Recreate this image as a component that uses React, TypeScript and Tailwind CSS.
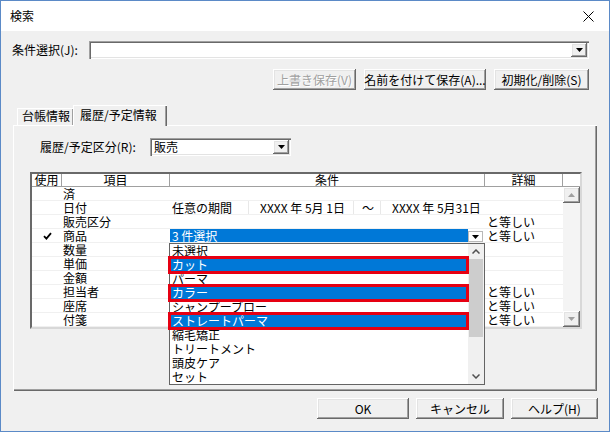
import React from 'react';

const raised =
  'shadow-[inset_-1px_-1px_0_#696969,inset_1px_1px_0_#ffffff,inset_-2px_-2px_0_#a0a0a0,inset_2px_2px_0_#e3e3e3]';
const sunken =
  'shadow-[inset_1px_1px_0_#a0a0a0,inset_2px_2px_0_#696969,inset_-1px_-1px_0_#ffffff,inset_-2px_-2px_0_#e3e3e3]';

const DownTri = ({ fill = '#000' }: { fill?: string }) => (
  <svg width="7" height="4" viewBox="0 0 7 4">
    <path d="M0 0H7L3.5 4Z" fill={fill} />
  </svg>
);

const UpTri = ({ fill = '#000' }: { fill?: string }) => (
  <svg width="7" height="4" viewBox="0 0 7 4">
    <path d="M0 4H7L3.5 0Z" fill={fill} />
  </svg>
);

const Chevron = ({ up = false }: { up?: boolean }) => (
  <svg width="8" height="5" viewBox="0 0 8 5">
    <path
      d={up ? 'M0.5 4.5L4 1L7.5 4.5' : 'M0.5 0.5L4 4L7.5 0.5'}
      fill="none"
      stroke="#505050"
      strokeWidth="1.5"
    />
  </svg>
);

const Combo = ({ value, className = '' }: { value?: string; className?: string }) => (
  <div className={`flex items-center h-[18px] bg-white ${sunken} ${className}`}>
    <span className="pl-[4px] flex-1 leading-[14px]">{value}</span>
    <div className={`mr-[2px] w-[16px] h-[14px] bg-[#f0f0f0] flex items-center justify-center ${raised}`}>
      <DownTri />
    </div>
  </div>
);

const Button = ({
  label,
  className = '',
  disabled = false,
}: {
  label: string;
  className?: string;
  disabled?: boolean;
}) => (
  <button
    className={`h-[21px] bg-[#f0f0f0] flex items-center justify-center leading-none ${raised} ${
      disabled ? 'text-[#a0a0a0] [text-shadow:1px_1px_0_#ffffff]' : 'text-black'
    } ${className}`}
  >
    {label}
  </button>
);

type Row = { name: string; used?: boolean; detail?: string; kind?: 'date' | 'combo' };

const rows: Row[] = [
  { name: '済' },
  { name: '日付', kind: 'date' },
  { name: '販売区分', detail: 'と等しい' },
  { name: '商品', used: true, detail: 'と等しい', kind: 'combo' },
  { name: '数量' },
  { name: '単価' },
  { name: '金額' },
  { name: '担当者', detail: 'と等しい' },
  { name: '座席', detail: 'と等しい' },
  { name: '付箋', detail: 'と等しい' },
];

const options: [string, boolean][] = [
  ['未選択', false],
  ['カット', true],
  ['パーマ', false],
  ['カラー', true],
  ['シャンプーブロー', false],
  ['ストレートパーマ', true],
  ['縮毛矯正', false],
  ['トリートメント', false],
  ['頭皮ケア', false],
  ['セット', false],
];

const Dropdown = () => (
  <div className="absolute left-[-1px] top-[14px] z-20 w-[316px] h-[142px] border border-[#646464] bg-white flex">
    <div className="w-[298px] flex flex-col">
      {options.map(([label, selected]) => (
        <div
          key={label}
          className={`relative h-[14px] leading-[14px] pl-[2px] ${selected ? 'bg-[#0078d7] text-white' : 'text-black'}`}
        >
          {label}
          {selected && (
            <div className="absolute -left-[2px] -right-[1px] -top-[2px] -bottom-[2px] border-[3px] border-[#e60012] z-10" />
          )}
        </div>
      ))}
    </div>
    <div className="w-[16px] bg-[#f0f0f0] flex flex-col">
      <div className="h-[15px] flex items-center justify-center">
        <Chevron up />
      </div>
      <div className="h-[78px] mx-[1px] bg-[#cdcdcd]" />
      <div className="flex-1" />
      <div className="h-[15px] flex items-center justify-center">
        <Chevron />
      </div>
    </div>
  </div>
);

const ConditionCell = ({ row }: { row: Row }) => {
  if (row.kind === 'date') {
    return (
      <div className="w-[315px] flex">
        <div className="w-[78px] pl-[2px]">任意の期間</div>
        <div className="w-[105px] pl-[11px] border-l border-[#e8e8e8]">XXXX 年 5月 1日</div>
        <div className="w-[27px] pl-[8px] border-l border-[#e8e8e8]">～</div>
        <div className="w-[105px] pl-[11px] border-l border-[#e8e8e8]">XXXX 年 5月31日</div>
      </div>
    );
  }
  if (row.kind === 'combo') {
    return (
      <div className="relative w-[315px] flex">
        <div className="w-[298px] bg-[#0078d7] text-white pl-[2px]">3 件選択</div>
        <div className="w-[15px] h-[11px] mt-[2px] bg-white border border-[#b8b8b8] flex items-center justify-center">
          <DownTri />
        </div>
        <Dropdown />
      </div>
    );
  }
  return <div className="w-[315px]" />;
};

const Check = () => (
  <svg width="9" height="8" viewBox="0 0 9 8">
    <path d="M1 4.2L3.4 6.6L8 1.2" fill="none" stroke="#000" strokeWidth="1.8" />
  </svg>
);

const ItemTable = () => (
  <div className="ml-[17px] mt-[16px] w-[552px] h-[157px] border-2 border-t-[#696969] border-l-[#696969] border-r-[#d8d8d8] border-b-[#d8d8d8] bg-white flex flex-col">
    <div className="flex h-[13px] leading-[12px] border-b border-[#a0a0a0] shrink-0">
      <div className="w-[30px] text-center border-r border-[#a0a0a0]">使用</div>
      <div className="w-[108px] text-center border-r border-[#a0a0a0]">項目</div>
      <div className="w-[315px] text-center border-r border-[#a0a0a0]">条件</div>
      <div className="w-[78px] text-center border-r border-[#a0a0a0]">詳細</div>
      <div className="w-[17px]" />
    </div>
    <div className="flex flex-1">
      <div className="w-[531px] flex flex-col">
        {rows.map((row) => (
          <div key={row.name} className="flex h-[14px] leading-[13px] border-b border-[#f0f0f0]">
            <div className="w-[30px] flex items-center justify-center">{row.used && <Check />}</div>
            <div className="w-[108px] pl-[1px]">{row.name}</div>
            <ConditionCell row={row} />
            <div className="w-[78px] pl-[2px]">{row.detail}</div>
          </div>
        ))}
      </div>
      <div className="w-[17px] bg-[#f4f4f4] flex flex-col">
        <div className={`h-[16px] bg-[#f0f0f0] flex items-center justify-center ${raised}`}>
          <UpTri fill="#a0a0a0" />
        </div>
        <div className="flex-1" />
        <div className={`h-[16px] bg-[#f0f0f0] flex items-center justify-center ${raised}`}>
          <DownTri fill="#a0a0a0" />
        </div>
      </div>
    </div>
  </div>
);

export default function App() {
  return (
    <div className="w-[610px] h-[432px] border border-[#5b8ac7] bg-[#f0f0f0] flex flex-col overflow-hidden text-[12px] text-black font-['Noto_Sans_CJK_JP','Noto_Sans_CJK_SC',sans-serif]">
      {/* title bar */}
      <div className="h-[30px] shrink-0 bg-white flex items-center justify-between pl-[9px] pr-[15px]">
        <span>検索</span>
        <svg width="11" height="11" viewBox="0 0 11 11">
          <path d="M0.5 0.5L10.5 10.5M10.5 0.5L0.5 10.5" stroke="#000" strokeWidth="1" />
        </svg>
      </div>

      <div className="flex items-center mt-[10px] pl-[11px] pr-[20px]">
        <span className="w-[77px]">条件選択(J):</span>
        <Combo className="flex-1" />
      </div>

      <div className="flex justify-end mt-[10px] pr-[20px] gap-[8px]">
        <Button label="上書き保存(V)" className="w-[83px]" disabled />
        <Button label="名前を付けて保存(A)..." className="w-[122px]" />
        <Button label="初期化/削除(S)" className="w-[95px]" />
      </div>

      {/* tabs */}
      <div className="mt-[15px] mx-[12px] flex flex-col">
        <div className="flex items-end h-[20px] pl-[4px]">
          <div className="w-[56px] h-[17px] pl-[5px] leading-[16px] shadow-[inset_1px_1px_0_#ffffff,inset_-1px_0_0_#a0a0a0]">
            台帳情報
          </div>
          <div className="relative z-10 w-[94px] h-[21px] -mb-[1px] pl-[7px] leading-[20px] bg-[#f0f0f0] shadow-[inset_1px_1px_0_#ffffff,inset_-1px_0_0_#696969,inset_-2px_0_0_#a0a0a0]">
            履歴/予定情報
          </div>
        </div>
        <div className="h-[266px] shadow-[inset_1px_1px_0_#ffffff,inset_-1px_-1px_0_#696969,inset_-2px_-2px_0_#a0a0a0] flex flex-col">
          <div className="flex items-center mt-[13px] pl-[27px]">
            <span className="w-[110px]">履歴/予定区分(R):</span>
            <Combo value="販売" className="w-[141px]" />
          </div>
          <ItemTable />
        </div>
      </div>

      <div className="flex justify-end mt-[7px] pr-[11px] gap-[7px]">
        <Button label="OK" className="w-[92px] h-[20px]" />
        <Button label="キャンセル" className="w-[88px] h-[20px]" />
        <Button label="ヘルプ(H)" className="w-[87px] h-[20px]" />
      </div>
    </div>
  );
}
